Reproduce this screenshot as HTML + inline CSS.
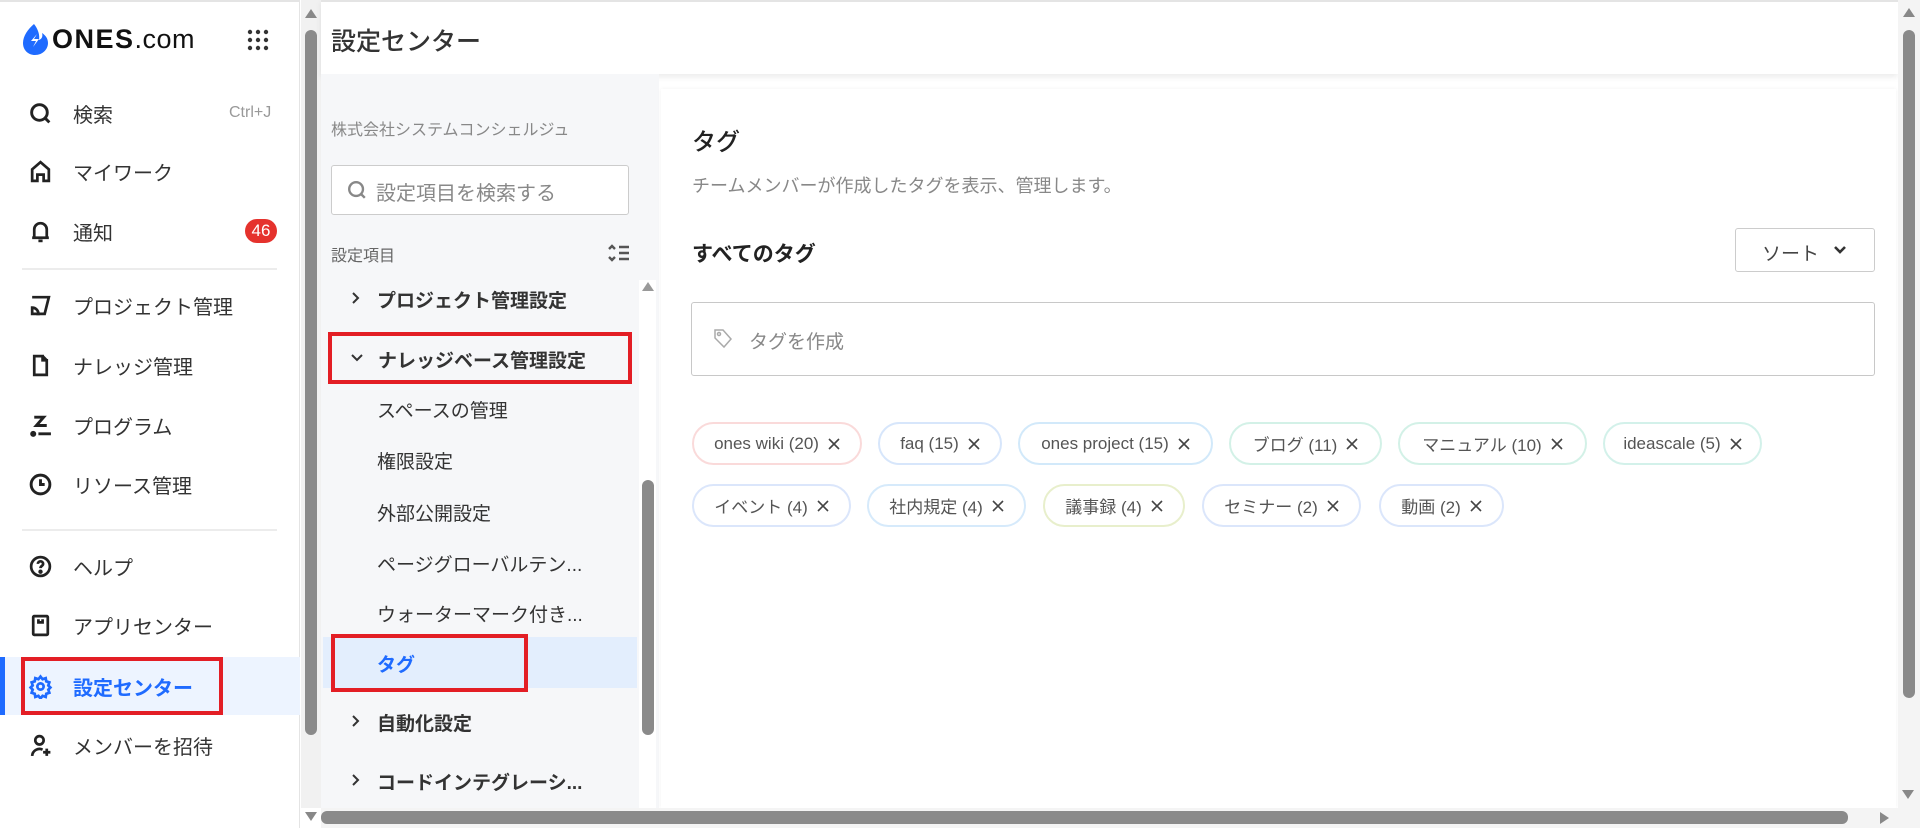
<!DOCTYPE html>
<html><head><meta charset="utf-8"><style>
*{margin:0;padding:0;box-sizing:border-box}
body{width:1920px;height:828px;overflow:hidden;background:#fff;font-family:"Liberation Sans","Noto Sans CJK JP",sans-serif;color:#222;position:relative}
.a{position:absolute;white-space:nowrap}
.side{left:0;top:0;width:300px;height:828px;background:#fff;border-right:1px solid #e4e4e4;border-top:2px solid #e4e4e4}
.si{position:absolute;left:0;width:300px;height:40px;display:flex;align-items:center;font-size:20px;color:#333}
.si svg{position:absolute;left:28px;width:25px;height:25px}
.si span{position:absolute;left:73px}
.div{position:absolute;left:22px;width:255px;height:2px;background:#ececec}
.tri{width:0;height:0;position:absolute}
.mid{left:321px;top:74px;width:338px;height:734px;background:#f6f7f9}
.ti{position:absolute;left:377px;font-size:19px;color:#333}
.chev{position:absolute;left:349px}
.tag{position:absolute;height:43px;border:2px solid;border-radius:22px;font-size:17px;color:#555;display:flex;align-items:center;justify-content:center}
.tag svg{margin-left:9px}
</style></head><body>
<div class="a side">
  <svg class="a" style="left:22px;top:21px" width="28" height="34" viewBox="0 0 28 34"><path d="M12 1C6 6 1 13 1 20c0 7 5 12 12 12 8 0 13-6 13-12 0-5-3-8-6-10 1 3 0 6-3 7 1-5-1-11-5-16z" fill="#1f6bff"/><path d="M9 18h5l-3 6 6-8h-5l3-5z" fill="#fff"/></svg>
  <div class="a" style="left:52px;top:22px;font-size:27px;font-weight:bold;color:#111;letter-spacing:1.5px">ONES<span style="font-weight:normal;letter-spacing:0.5px">.com</span></div>
  <svg class="a" style="left:247px;top:27px" width="22" height="22" viewBox="0 0 22 22" fill="#333"><circle cx="3" cy="3" r="2.2"/><circle cx="11" cy="3" r="2.2"/><circle cx="19" cy="3" r="2.2"/><circle cx="3" cy="11" r="2.2"/><circle cx="11" cy="11" r="2.2"/><circle cx="19" cy="11" r="2.2"/><circle cx="3" cy="19" r="2.2"/><circle cx="11" cy="19" r="2.2"/><circle cx="19" cy="19" r="2.2"/></svg>
  <div class="si" style="top:91px"><svg viewBox="0 0 24 24" fill="none" stroke="#222" stroke-width="2.8"><circle cx="11" cy="11" r="7.5"/><path d="M16.5 16.5l4 4"/></svg><span>検索</span><span style="left:229px;font-size:16px;color:#999">Ctrl+J</span></div>
  <div class="si" style="top:149px"><svg viewBox="0 0 24 24" fill="none" stroke="#222" stroke-width="2.6"><path d="M4 21V10l8-7 8 7v11h-5v-6h-6v6z"/></svg><span>マイワーク</span></div>
  <div class="si" style="top:209px"><svg viewBox="0 0 24 24" fill="none" stroke="#222" stroke-width="2.6"><path d="M6 18V10a6 6 0 0112 0v8H4h16"/><path d="M10 21h4"/></svg><span>通知</span><div style="position:absolute;left:245px;width:32px;height:24px;border-radius:12px;background:#e5322d;color:#fff;font-size:17px;text-align:center;line-height:24px">46</div></div>
  <div class="div" style="top:266px"></div>
  <div class="si" style="top:283px"><svg viewBox="0 0 24 24" fill="none" stroke="#222" stroke-width="2.6"><path d="M4 4h16l-4 16H8"/><path d="M4 14a6 6 0 016 6H4z"/></svg><span>プロジェクト管理</span></div>
  <div class="si" style="top:343px"><svg viewBox="0 0 24 24" fill="none" stroke="#222" stroke-width="2.6"><path d="M6 3h8v4h4v14H6z"/><path d="M14 3l4 4"/></svg><span>ナレッジ管理</span></div>
  <div class="si" style="top:403px"><svg viewBox="0 0 24 24" fill="none" stroke="#222" stroke-width="2.8"><path d="M6 4h9l-7 8h10M10 20h12"/><circle cx="5" cy="20" r="1.5" fill="#222"/></svg><span>プログラム</span></div>
  <div class="si" style="top:462px"><svg viewBox="0 0 24 24" fill="none" stroke="#222" stroke-width="2.8"><circle cx="12" cy="12" r="9"/><path d="M12 7v5h4"/></svg><span>リソース管理</span></div>
  <div class="div" style="top:527px"></div>
  <div class="si" style="top:544px"><svg viewBox="0 0 24 24" fill="none" stroke="#222" stroke-width="2.6"><circle cx="12" cy="12" r="9"/><path d="M9.5 9.5a2.5 2.5 0 115 0c0 2-2.5 2-2.5 4"/><circle cx="12" cy="17" r="0.8" fill="#222"/></svg><span>ヘルプ</span></div>
  <div class="si" style="top:603px"><svg viewBox="0 0 24 24" fill="none" stroke="#222" stroke-width="2.6"><rect x="5" y="3" width="14" height="18" rx="1"/><path d="M10 6v3h4V6"/></svg><span>アプリセンター</span></div>
  <div class="si" style="top:655px;height:58px;background:#edf4ff;color:#1f6bff;font-weight:bold"><div style="position:absolute;left:0;top:0;width:5px;height:58px;background:#1f6bff"></div><svg viewBox="0 0 24 24" fill="none" stroke="#1f6bff" stroke-width="2.6"><circle cx="12" cy="12" r="3"/><path d="M12 2.5l2 2.5 3-1 .5 3 3 1-1 3 2 2-2 2 1 3-3 1-.5 3-3-1-2 2.5-2-2.5-3 1-.5-3-3-1 1-3-2-2 2-2-1-3 3-1 .5-3 3 1z"/></svg><span>設定センター</span></div>
  <div class="a" style="left:21px;top:655px;width:202px;height:58px;border:4px solid #e31e25"></div>
  <div class="si" style="top:723px"><svg viewBox="0 0 24 24" fill="none" stroke="#222" stroke-width="2.6"><circle cx="11" cy="7" r="4"/><path d="M4 22a7 7 0 0110-6"/><path d="M18 15v7M14.5 18.5h7"/></svg><span>メンバーを招待</span></div>
</div>
<div class="a" style="left:301px;top:0;width:20px;height:808px;background:#f1f1f1"></div>
<div class="tri" style="left:305px;top:9px;border-left:6px solid transparent;border-right:6px solid transparent;border-bottom:9px solid #888"></div>
<div class="a" style="left:305px;top:30px;width:12px;height:705px;border-radius:6px;background:#8a8a8a"></div>
<div class="tri" style="left:305px;top:812px;border-left:6px solid transparent;border-right:6px solid transparent;border-top:9px solid #888"></div>
<div class="a" style="left:321px;top:0;width:1577px;height:74px;background:#fff;border-top:2px solid #e4e4e4;box-shadow:0 3px 6px rgba(0,0,0,0.08)"></div>
<div class="a" style="left:331px;top:22px;font-size:25px;font-weight:500;color:#333">設定センター</div>
<div class="a mid"></div>
<div class="a" style="left:331px;top:116px;font-size:16px;color:#888">株式会社システムコンシェルジュ</div>
<div class="a" style="left:331px;top:165px;width:298px;height:50px;border:1px solid #ccc;border-radius:3px;background:#fff"></div>
<svg class="a" style="left:346px;top:179px" width="22" height="22" viewBox="0 0 24 24" fill="none" stroke="#888" stroke-width="2.6"><circle cx="11" cy="11" r="7.5"/><path d="M16.5 16.5l4 4"/></svg>
<div class="a" style="left:376px;top:177px;font-size:20px;color:#888">設定項目を検索する</div>
<div class="a" style="left:331px;top:242px;font-size:16px;color:#666">設定項目</div>
<svg class="a" style="left:607px;top:243px" width="24" height="20" viewBox="0 0 24 20" fill="none" stroke="#555" stroke-width="2.4"><path d="M2 6l3-3 3 3M2 14l3 3 3-3M12 4h10M12 10h10M12 16h10"/></svg>
<div class="a" style="left:639px;top:280px;width:17px;height:528px;background:#fff"></div>
<div class="tri" style="left:642px;top:282px;border-left:6px solid transparent;border-right:6px solid transparent;border-bottom:9px solid #999"></div>
<div class="a" style="left:642px;top:480px;width:12px;height:255px;border-radius:6px;background:#8a8a8a"></div>
<div class="a" style="left:323px;top:637px;width:314px;height:51px;background:#e3eefd"></div>
<svg class="chev" style="top:290px" width="14" height="16" viewBox="0 0 14 16" fill="none" stroke="#333" stroke-width="2"><path d="M4 3l5 5-5 5"/></svg>
<div class="ti" style="top:286px;font-weight:bold">プロジェクト管理設定</div>
<svg class="chev" style="top:351px" width="16" height="14" viewBox="0 0 16 14" fill="none" stroke="#333" stroke-width="2"><path d="M3 4l5 5 5-5"/></svg>
<div class="ti" style="top:346px;left:378px;font-weight:bold">ナレッジベース管理設定</div>
<div class="a" style="left:328px;top:332px;width:304px;height:52px;border:4px solid #e31e25"></div>
<div class="ti" style="top:396px">スペースの管理</div>
<div class="ti" style="top:447px">権限設定</div>
<div class="ti" style="top:499px">外部公開設定</div>
<div class="ti" style="top:550px">ページグローバルテン...</div>
<div class="ti" style="top:600px">ウォーターマーク付き...</div>
<div class="ti" style="top:650px;color:#1f6bff;font-weight:bold">タグ</div>
<div class="a" style="left:331px;top:634px;width:197px;height:58px;border:4px solid #e31e25"></div>
<svg class="chev" style="top:713px" width="14" height="16" viewBox="0 0 14 16" fill="none" stroke="#333" stroke-width="2"><path d="M4 3l5 5-5 5"/></svg>
<div class="ti" style="top:709px;font-weight:bold">自動化設定</div>
<svg class="chev" style="top:772px" width="14" height="16" viewBox="0 0 14 16" fill="none" stroke="#333" stroke-width="2"><path d="M4 3l5 5-5 5"/></svg>
<div class="ti" style="top:768px;font-weight:bold">コードインテグレーシ...</div>
<div class="a" style="left:661px;top:89px;width:1235px;height:719px;background:#fff;box-shadow:0 0 4px rgba(0,0,0,0.05)"></div>
<div class="a" style="left:692px;top:122px;font-size:24px;font-weight:500;color:#222">タグ</div>
<div class="a" style="left:692px;top:172px;font-size:18px;color:#888">チームメンバーが作成したタグを表示、管理します。</div>
<div class="a" style="left:692px;top:238px;font-size:21px;font-weight:bold;color:#222">すべてのタグ</div>
<div class="a" style="left:1735px;top:228px;width:140px;height:44px;border:1px solid #ccc;border-radius:3px;font-size:19px;color:#444;padding:10px 0 0 26px">ソート</div>
<svg class="a" style="left:1833px;top:244px" width="14" height="12" viewBox="0 0 14 12" fill="none" stroke="#333" stroke-width="2.6"><path d="M2 3l5 5 5-5"/></svg>
<div class="a" style="left:691px;top:302px;width:1184px;height:74px;border:1px solid #c8c8c8;border-radius:3px"></div>
<svg class="a" style="left:712px;top:327px" width="22" height="24" viewBox="0 0 22 24" fill="none" stroke="#aaa" stroke-width="1.5"><path d="M3 3h8l8 9-7 8-9-9z"/><circle cx="7" cy="7" r="1.5"/></svg>
<div class="a" style="left:749px;top:327px;font-size:19px;color:#888">タグを作成</div>
<div class="tag" style="left:692px;top:422px;width:170px;border-color:#fadada">ones wiki (20)<svg width="12" height="12" viewBox="0 0 12 12" stroke="#444" stroke-width="1.6"><path d="M1 1l10 10M11 1L1 11"/></svg></div>
<div class="tag" style="left:878px;top:422px;width:124px;border-color:#d7e6fb">faq (15)<svg width="12" height="12" viewBox="0 0 12 12" stroke="#444" stroke-width="1.6"><path d="M1 1l10 10M11 1L1 11"/></svg></div>
<div class="tag" style="left:1018px;top:422px;width:195px;border-color:#d2e9fa">ones project (15)<svg width="12" height="12" viewBox="0 0 12 12" stroke="#444" stroke-width="1.6"><path d="M1 1l10 10M11 1L1 11"/></svg></div>
<div class="tag" style="left:1229px;top:422px;width:153px;border-color:#d3f1e7">ブログ (11)<svg width="12" height="12" viewBox="0 0 12 12" stroke="#444" stroke-width="1.6"><path d="M1 1l10 10M11 1L1 11"/></svg></div>
<div class="tag" style="left:1398px;top:422px;width:189px;border-color:#d3f1e7">マニュアル (10)<svg width="12" height="12" viewBox="0 0 12 12" stroke="#444" stroke-width="1.6"><path d="M1 1l10 10M11 1L1 11"/></svg></div>
<div class="tag" style="left:1603px;top:422px;width:159px;border-color:#d3f1ea">ideascale (5)<svg width="12" height="12" viewBox="0 0 12 12" stroke="#444" stroke-width="1.6"><path d="M1 1l10 10M11 1L1 11"/></svg></div>
<div class="tag" style="left:692px;top:484px;width:159px;border-color:#dbe6fb">イベント (4)<svg width="12" height="12" viewBox="0 0 12 12" stroke="#444" stroke-width="1.6"><path d="M1 1l10 10M11 1L1 11"/></svg></div>
<div class="tag" style="left:867px;top:484px;width:159px;border-color:#d6eafb">社内規定 (4)<svg width="12" height="12" viewBox="0 0 12 12" stroke="#444" stroke-width="1.6"><path d="M1 1l10 10M11 1L1 11"/></svg></div>
<div class="tag" style="left:1043px;top:484px;width:142px;border-color:#e8efcc">議事録 (4)<svg width="12" height="12" viewBox="0 0 12 12" stroke="#444" stroke-width="1.6"><path d="M1 1l10 10M11 1L1 11"/></svg></div>
<div class="tag" style="left:1202px;top:484px;width:159px;border-color:#dbe6fb">セミナー (2)<svg width="12" height="12" viewBox="0 0 12 12" stroke="#444" stroke-width="1.6"><path d="M1 1l10 10M11 1L1 11"/></svg></div>
<div class="tag" style="left:1379px;top:484px;width:125px;border-color:#dbe6fb">動画 (2)<svg width="12" height="12" viewBox="0 0 12 12" stroke="#444" stroke-width="1.6"><path d="M1 1l10 10M11 1L1 11"/></svg></div>
<div class="a" style="left:1898px;top:0;width:22px;height:828px;background:#f4f4f4"></div>
<div class="tri" style="left:1903px;top:8px;border-left:6px solid transparent;border-right:6px solid transparent;border-bottom:9px solid #888"></div>
<div class="a" style="left:1903px;top:30px;width:12px;height:668px;border-radius:6px;background:#8a8a8a"></div>
<div class="tri" style="left:1902px;top:790px;border-left:6px solid transparent;border-right:6px solid transparent;border-top:9px solid #888"></div>
<div class="a" style="left:321px;top:808px;width:1577px;height:20px;background:#f4f4f4"></div>
<div class="a" style="left:321px;top:811px;width:1527px;height:13px;border-radius:6px;background:#8a8a8a"></div>
<div class="tri" style="left:1880px;top:812px;border-top:6px solid transparent;border-bottom:6px solid transparent;border-left:9px solid #888"></div>
</body></html>
